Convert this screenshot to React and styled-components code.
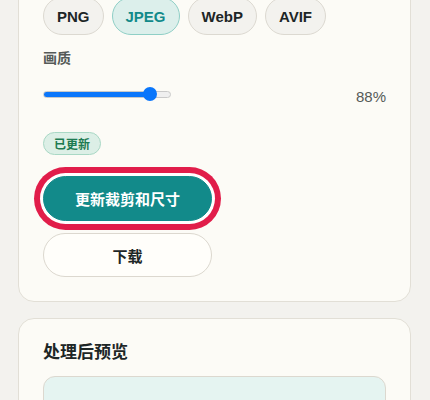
import React from "react";
import styled, { createGlobalStyle } from "styled-components";

const GlobalStyle = createGlobalStyle`
  html, body {
    margin: 0;
    padding: 0;
    background: #f3f2ee;
    overflow: hidden;
  }
  body {
    font-family: "Liberation Sans", "Noto Sans CJK SC", sans-serif;
    color: #1d2626;
  }
`;

const Page = styled.div`
  display: flex;
  flex-direction: column;
  gap: 16px;
  padding: 0 19px 0 18px;
  margin-top: -30px;
`;

const Card = styled.section`
  background: #fcfbf6;
  border: 1px solid #e2dfd6;
  border-radius: 16px;
  padding: ${(p) => p.$pad || "24px"};
  display: flex;
  flex-direction: column;
`;

const Formats = styled.div`
  display: flex;
  gap: 8px;
`;

const FormatPill = styled.button`
  height: 38px;
  padding: 0 13px;
  border-radius: 19px;
  border: 1px solid ${(p) => (p.$active ? "#8fcfc6" : "#dcd9d1")};
  background: ${(p) => (p.$active ? "#dcefeb" : "#f3f2ee")};
  color: ${(p) => (p.$active ? "#128a8a" : "#1d2626")};
  font-family: "Liberation Sans", sans-serif;
  font-weight: 700;
  font-size: 15px;
  cursor: pointer;
`;

const Label = styled.div`
  margin-top: 14px;
  font-size: 14px;
  line-height: 18px;
  font-weight: 700;
  color: #555a58;
`;

const SliderRow = styled.div`
  display: flex;
  align-items: center;
  justify-content: space-between;
  margin-top: 18px;
  height: 18px;
`;

const Range = styled.input`
  -webkit-appearance: none;
  appearance: none;
  width: 128px;
  height: 14px;
  margin: 0;
  background: transparent;

  &::-webkit-slider-runnable-track {
    height: 7px;
    border-radius: 4px;
    box-sizing: border-box;
    border: 1px solid #c9c9c9;
    background: linear-gradient(
      to right,
      #0a76fb 0,
      #0a76fb ${(p) => p.$pct}%,
      #efefef ${(p) => p.$pct}%
    );
  }
  &::-webkit-slider-thumb {
    -webkit-appearance: none;
    width: 14px;
    height: 14px;
    border-radius: 50%;
    background: #0a76fb;
    margin-top: -4.5px;
    border: none;
  }
`;

const Value = styled.span`
  font-family: "Liberation Sans", sans-serif;
  font-size: 15px;
  color: #555a58;
  padding-top: 5px;
`;

const Badge = styled.span`
  align-self: flex-start;
  margin-top: 29px;
  height: 23px;
  box-sizing: border-box;
  padding: 0 10px;
  display: inline-flex;
  align-items: center;
  border-radius: 12px;
  border: 1px solid #a9d8c5;
  background: #dcefe6;
  color: #1e7b52;
  font-size: 12px;
  font-weight: 700;
`;

const Actions = styled.div`
  display: flex;
  flex-direction: column;
  gap: 12px;
  margin-top: 21px;
`;

const Button = styled.button`
  width: 169px;
  height: ${(p) => (p.$primary ? "45px" : "44px")};
  border-radius: 23px;
  font-family: "Liberation Sans", "Noto Sans CJK SC", sans-serif;
  font-size: 15px;
  font-weight: 700;
  cursor: pointer;
  border: 1px solid ${(p) => (p.$primary ? "#128a8a" : "#dcd8cf")};
  background: ${(p) => (p.$primary ? "#128a8a" : "#fffefa")};
  color: ${(p) => (p.$primary ? "#ffffff" : "#1d2626")};
  box-shadow: ${(p) =>
    p.$focused ? "0 0 0 3px #ffffff, 0 0 0 9px #e11d4a" : "none"};
`;

const Title = styled.h2`
  margin: 0;
  font-size: 17px;
  line-height: 20px;
  font-weight: 700;
  color: #1d2626;
`;

const Preview = styled.div`
  margin-top: 13px;
  height: 140px;
  border-radius: 12px;
  border: 1px solid #dcd8cf;
  background: #e5f4f1;
`;

const formats = ["PNG", "JPEG", "WebP", "AVIF"];

export default function App() {
  const quality = 88;
  return (
    <>
      <GlobalStyle />
      <Page>
        <Card $pad="26px 24px 24px">
          <Formats>
            {formats.map((f) => (
              <FormatPill key={f} $active={f === "JPEG"}>
                {f}
              </FormatPill>
            ))}
          </Formats>
          <Label>画质</Label>
          <SliderRow>
            <Range
              type="range"
              min="0"
              max="100"
              defaultValue={quality}
              $pct={quality}
            />
            <Value>{quality}%</Value>
          </SliderRow>
          <Badge>已更新</Badge>
          <Actions>
            <Button $primary $focused>
              更新裁剪和尺寸
            </Button>
            <Button>下载</Button>
          </Actions>
        </Card>
        <Card>
          <Title>处理后预览</Title>
          <Preview />
        </Card>
      </Page>
    </>
  );
}
